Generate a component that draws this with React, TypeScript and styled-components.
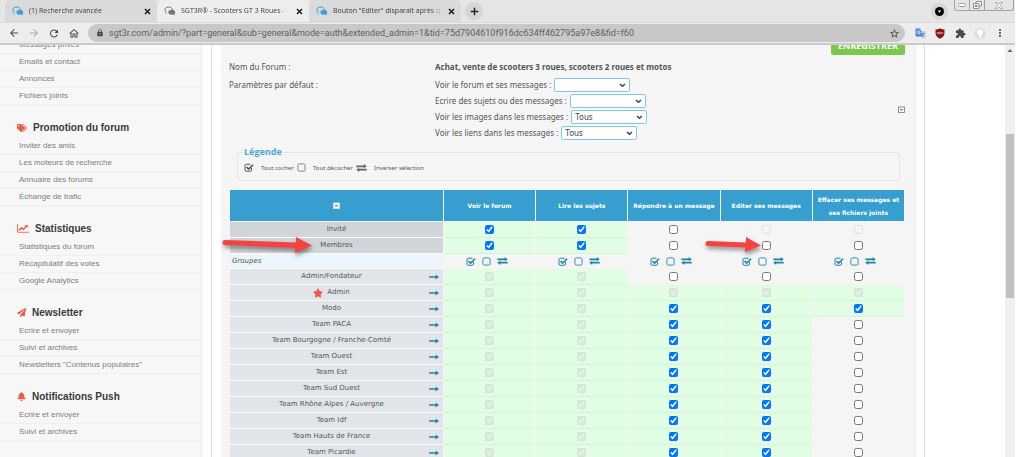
import React from 'react';
import styled, { createGlobalStyle, css } from 'styled-components';
import {
  MdArrowBack,
  MdArrowForward,
  MdRefresh,
  MdOutlineHome,
  MdLock,
  MdStarBorder,
  MdExtension,
  MdMoreVert,
} from 'react-icons/md';
import { FaTags, FaPaperPlane, FaBell, FaStar } from 'react-icons/fa';

const GlobalStyle = createGlobalStyle`
  *, *::before, *::after { box-sizing: border-box; }
  body {
    margin: 0;
    background: #fff;
    font-family: "DejaVu Sans", Verdana, sans-serif;
    font-size: 7px;
    color: #555;
  }
  button, select, input { font: inherit; margin: 0; }
  button { border: 0; padding: 0; background: none; color: inherit; }
  a { color: inherit; text-decoration: none; }
`;

const Window = styled.div`
  display: flex;
  flex-direction: column;
  height: 100vh;
  margin-right: 9px;
  overflow: hidden;
`;

/* ---------- browser frame ---------- */

const TabStrip = styled.div`
  display: flex;
  flex: none;
  height: 22px;
  padding-left: 5px;
  background: #e5e5e5;
`;

const Tab = styled.div<{ $active?: boolean }>`
  display: flex;
  align-items: center;
  gap: 5px;
  width: 152px;
  padding: 0 5px 0 7px;
  border-radius: 5px 5px 0 0;
  background: ${(p) => (p.$active ? '#ededed' : '#dadada')};
  color: #3c3c3c;
  font: 7px/10px "Open Sans", "Segoe UI", sans-serif;
`;

const TabTitle = styled.span`
  flex: 1;
  overflow: hidden;
  white-space: nowrap;
  mask-image: linear-gradient(to left, transparent, #000 12px);
`;

const IconButton = styled.button<{ $size?: number; $color?: string }>`
  display: flex;
  flex: none;
  align-items: center;
  justify-content: center;
  width: ${(p) => p.$size ?? 12}px;
  height: ${(p) => p.$size ?? 12}px;
  color: ${(p) => p.$color ?? '#4a4a4a'};
`;

const RoundButton = styled(IconButton)`
  align-self: center;
  border-radius: 50%;
  background: #d6d6d6;
`;

const NewTabButton = styled(RoundButton)`
  margin-left: 4px;
`;

const StripEnd = styled.div`
  display: flex;
  gap: 6px;
  margin-left: auto;
`;

const WindowControls = styled.div`
  display: flex;
  width: 60px;
  height: 11px;
  margin-right: 1px;
  border: 1px solid #a2a2a2;
  border-top: 0;
  border-radius: 0 0 3px 3px;
`;

const WindowControl = styled.button`
  display: flex;
  flex: 1;
  align-items: center;
  justify-content: center;
  & + & { border-left: 1px solid #a2a2a2; }
  &:last-child { flex: 2; }
`;

const Toolbar = styled.div`
  display: flex;
  flex: none;
  align-items: center;
  gap: 8px;
  height: 23px;
  padding: 0 9px 0 8px;
  border-top: 1px solid #dadada;
  border-bottom: 2px solid #cbcbcb;
  background: #ededed;
`;

const AddressBar = styled.div`
  display: flex;
  flex: 1;
  align-items: center;
  gap: 5px;
  height: 18px;
  margin-right: 1px;
  padding: 0 5px 0 8px;
  border-radius: 9px;
  background: #c8c8c9;
  color: #444;
`;

const AddressInput = styled.input`
  flex: 1;
  min-width: 0;
  padding: 0;
  border: 0;
  background: none;
  color: #606060;
  font: 9px/12px Roboto, "Segoe UI", sans-serif;
`;

/* ---------- page ---------- */

const Page = styled.div`
  display: flex;
  flex: 1;
  min-height: 0;
  overflow: hidden;
`;

const Sidebar = styled.nav`
  flex: none;
  width: 202px;
  border-right: 1px solid #ececec;
  background: #f7f7f7;
  font-family: "Liberation Sans", Arial, sans-serif;
  font-size: 8px;
  color: #7d7d7d;
`;

const MenuGroups = styled.div`
  margin-top: -8px;
`;

const MenuTitle = styled.h2`
  display: flex;
  align-items: center;
  gap: 6px;
  height: 17px;
  margin: 14px 0 2px;
  padding-left: 17px;
  color: #3a3a3a;
  font-size: 10px;
  font-weight: bold;
  svg { color: #f0594a; }
`;

const MenuList = styled.ul`
  margin: 0;
  padding: 0;
  list-style: none;
`;

const MenuItem = styled.li`
  height: 17px;
  padding-left: 19px;
  border-bottom: 1px solid #f0f0f0;
  line-height: 16px;
  white-space: nowrap;
`;

const Frame = styled.main`
  flex: 1;
  min-width: 0;
  margin: 0 80px 0 9px;
  padding: 0 8px 0 9px;
  border: 1px solid #e2e2e2;
  border-width: 0 1px;
`;

const Panel = styled.div`
  min-height: 100%;
  padding: 0 10px 0 8px;
  border: 1px solid #ebebeb;
  border-width: 0 1px 0 0;
  background: #f5f5f5;
`;

const SaveRow = styled.div`
  display: flex;
  justify-content: flex-end;
  margin-top: -8px;
`;

const SaveButton = styled.button`
  height: 18px;
  width: 74px;
  border-radius: 2px;
  background: #7cc84e;
  color: #fff;
  font: bold 9px/18px "Open Sans", sans-serif;
`;

const Field = styled.div`
  display: grid;
  grid-template-columns: 206px 1fr auto;
  min-height: 16px;
  font: 8px/16px "Noto Sans", Verdana, sans-serif;
`;

const ForumField = styled(Field)`
  margin: 4px 0 2px;
`;

const DefaultsLine = styled.div`
  display: flex;
  align-items: center;
  gap: 3px;
  height: 16px;
`;

const SelectWrap = styled.span`
  position: relative;
  display: flex;
  width: 76px;
  svg { position: absolute; right: 4px; top: 5px; pointer-events: none; }
`;

const Select = styled.select`
  appearance: none;
  width: 100%;
  height: 14px;
  padding: 0 3px;
  border: 1px solid #7ccbee;
  border-radius: 2px;
  background: #fff;
  color: #444;
  line-height: 12px;
`;

const CollapseButton = styled(IconButton)`
  align-self: center;
`;

const LegendBox = styled.fieldset`
  display: flex;
  align-items: center;
  min-width: 0;
  height: 34px;
  margin: 6px 5px 8px 8px;
  padding: 0 6px 2px;
  border: 1px solid #e6e6e6;
  border-radius: 3px;
  font: 6px/8px "Noto Sans", sans-serif;
`;

const LegendTitle = styled.legend`
  padding: 0 2px 0 0;
  color: #4aa8d6;
  font: bold 9px/10px "Open Sans", sans-serif;
`;

const LegendItems = styled.div`
  display: flex;
  align-items: center;
  gap: 3px;
`;

const LegendItem = styled.span`
  display: flex;
  align-items: center;
  gap: 7px;
`;

/* ---------- rights table ---------- */

const Table = styled.table`
  width: 100%;
  table-layout: fixed;
  border-collapse: separate;
  border-spacing: 1px;
`;

const HeadCell = styled.th<{ $first?: boolean }>`
  width: ${(p) => (p.$first ? '213px' : 'auto')};
  height: 31px;
  padding: 0 2px;
  background: #369fcf;
  color: #fff;
  font: bold 6px/13px "DejaVu Sans", Verdana, sans-serif;
  button { margin: 0 auto; }
`;

const tones = {
  base: '#d1d5d9',
  group: '#e1e5ea',
  section: '#ecf6fa',
};

const NameCell = styled.th<{ $tone: keyof typeof tones }>`
  position: relative;
  height: 15px;
  padding: 0;
  background: ${(p) => tones[p.$tone]};
  box-shadow: 0 1px 0 #fdfdfd;
  color: #555;
  font-weight: normal;
  line-height: 13px;
  ${(p) =>
    p.$tone === 'section' &&
    css`
      height: 14px;
      padding-left: 2px;
      font-style: italic;
      text-align: left;
    `}
`;

const NameLine = styled.div`
  display: flex;
  align-items: center;
  padding: 0 4px;
`;

const Name = styled.span`
  display: flex;
  flex: 1;
  align-items: center;
  justify-content: center;
  gap: 4px;
  svg { color: #f0594a; }
`;

const RightCell = styled.td<{ $granted?: boolean }>`
  position: relative;
  padding: 0;
  background: ${(p) => (p.$granted ? '#e1fee4' : '#f5f5f5')};
  box-shadow: ${(p) => (p.$granted ? '0 1px 0 #d3f7d5' : 'none')};
  text-align: center;
`;

const Checkbox = styled.input`
  display: block;
  width: 9px;
  height: 9px;
  margin: 0 auto;
  &:disabled { opacity: 0.5; }
`;

const Tools = styled.div`
  display: flex;
  align-items: center;
  justify-content: center;
  gap: 6px;
  padding-right: 6px;
`;

const Pointer = styled.svg<{ $long?: boolean }>`
  position: absolute;
  z-index: 1;
  top: -2px;
  ${(p) => (p.$long ? 'left: -8px;' : 'right: calc(50% + 5px);')}
  overflow: visible;
  filter: drop-shadow(1px 3px 2px rgba(0, 0, 0, 0.4));
  pointer-events: none;
`;

const Scrollbar = styled.div`
  display: flex;
  flex: none;
  flex-direction: column;
  align-items: center;
  width: 10px;
  padding-top: 3px;
  background: #f0f0f0;
`;

const ScrollThumb = styled.div`
  width: 8px;
  height: 40%;
  margin-top: 81px;
  background: #c1c1c1;
`;

/* ---------- drawings ---------- */

const Favicon = ({ grey }: { grey?: boolean }) => {
  const c = grey ? '#777' : '#3ba0da';
  return (
    <svg width="12" height="10" viewBox="0 0 24 20">
      <path d="M3 15c1.200-.7 1.700-1.700 1.700-2.900C2.800 10.900 1.800 9.400 1.800 7.700 1.800 4.500 5 2 9.300 2s7.200 2.200 7.500 4.800" fill="none" stroke={c} strokeWidth="2" strokeLinecap="round" />
      <path d="M15.500 7.500c-3.900 0-7 2.200-7 5s3.100 5 7 5c.8 0 1.600-.1 2.300-.3 1 .7 2.400 1.300 4.200 1.300-.8-.8-1.200-1.700-1.200-2.700 1.100-.9 1.700-2.100 1.700-3.300 0-2.800-3.100-5-7-5z" fill={c} />
    </svg>
  );
};

const Cross = () => (
  <svg width="7" height="7" viewBox="0 0 14 14" stroke="currentColor" strokeWidth="3.200">
    <path d="M2 2l10 10M12 2L2 12" />
  </svg>
);

const Plus = () => (
  <svg width="9" height="9" viewBox="0 0 18 18" stroke="currentColor" strokeWidth="3">
    <path d="M9 1.500v15M1.500 9h15" />
  </svg>
);

const CheckSquare = ({ color = '#1f87a6' }: { color?: string }) => (
  <svg width="10" height="9" viewBox="0 0 20 18" fill="none" stroke={color}>
    <path d="M15 10v4a2.500 2.500 0 0 1-2.500 2.500H4.500A2.500 2.500 0 0 1 2 14V5a2.500 2.500 0 0 1 2.500-2.500H13" strokeWidth="2" />
    <path d="M5 8l4.300 4.300L18.300 3.500" strokeWidth="3.400" />
  </svg>
);

const EmptySquare = ({ color = '#1f87a6' }: { color?: string }) => (
  <svg width="9" height="9" viewBox="0 0 18 18" fill="none" stroke={color}>
    <rect x="1.800" y="1.800" width="14.400" height="14.400" rx="3" strokeWidth="1.800" />
  </svg>
);

const Exchange = ({ color = '#1f87a6' }: { color?: string }) => (
  <svg width="11" height="8" viewBox="0 0 22 16" fill={color}>
    <path d="M.5 3h15V.2l6 4.500-6 4V6.400H.5zM21.500 9.700H6.500V7.400L.5 11.500l6 4.300V13.100h15z" />
  </svg>
);

const ArrowRight = () => (
  <svg width="10" height="6" viewBox="0 0 20 12" fill="#1f87a6">
    <path d="M0 4.300h13V1l7 5-7 5V7.700H0z" />
  </svg>
);

const ChartLine = () => (
  <svg width="12" height="9" viewBox="0 0 24 18" fill="none" stroke="currentColor">
    <path d="M1.200 0v16.500H24" strokeWidth="1.800" />
    <path d="M4 12.500l5-5 3.500 3.500 6.500-6.500" strokeWidth="3" />
    <path d="M15.500 2h6v6z" fill="currentColor" stroke="none" />
  </svg>
);

const Chevron = () => (
  <svg width="7" height="5" viewBox="0 0 14 10" fill="none" stroke="#444" strokeWidth="3.200">
    <path d="M2 2l5 4.500L12 2" />
  </svg>
);

const Minus = ({ light }: { light?: boolean }) => (
  <svg width="7" height="7" viewBox="0 0 14 14">
    <rect x="1" y="2" width="12" height="11" fill="#f7f7f7" stroke={light ? '#d8e6ee' : '#777'} strokeWidth="1.600" />
    <path d="M4 7.500h6" stroke="#555" strokeWidth="1.800" />
  </svg>
);

const Translate = () => (
  <svg width="11" height="11" viewBox="0 0 22 22">
    <path d="M9 6h10a2 2 0 0 1 2 2v11a2 2 0 0 1-2 2h-6z" fill="#c9ccd1" />
    <path d="M14 11h6M17 10c0 4-2 6-3 7M15 13c1 2 3 4 4 4" stroke="#5f7fae" strokeWidth="1.300" fill="none" />
    <path d="M2.500 1h8l5 16H2.500A1.500 1.500 0 0 1 1 15.500v-13A1.500 1.500 0 0 1 2.500 1z" fill="#4a86ee" />
    <path d="M10 7.300A3 3 0 1 0 10.300 9H7.700" stroke="#fff" strokeWidth="1.500" fill="none" />
  </svg>
);

const Shield = () => (
  <svg width="10" height="11" viewBox="0 0 20 22">
    <path d="M10 .5c3 2 6 2.600 9 2.700v7c0 5.500-4 9-9 11.500C5 19.200 1 15.700 1 10.200v-7C4 3.100 7 2.500 10 .5z" fill="#8c0f14" />
    <path d="M4.500 8v3.500h2.700V8M9.300 7v4.500h2V9.300h-2M14.500 8.600a1.400 1.400 0 1 0 .1 0" stroke="#f2dcdc" strokeWidth="1.200" fill="none" />
  </svg>
);

const Avatar = () => (
  <svg width="13" height="13" viewBox="0 0 26 26">
    <circle cx="13" cy="13" r="12.500" fill="#dedede" />
    <path d="M13 4c4 0 6 2.500 6 6s-2 5-3 7v5h-5v-5c-3-1-4-4-4-7s2-6 6-6z" fill="#fff" />
  </svg>
);

const RedArrow = ({ long }: { long?: boolean }) =>
  long ? (
    <Pointer $long width="90" height="18" viewBox="0 0 90 18" aria-hidden="true">
      <path d="M3 4L74 6.500V1L90 9.500 73 17v-5L3 9A2.500 2.500 0 0 1 3 4z" fill="#f74242" />
    </Pointer>
  ) : (
    <Pointer width="56" height="18" viewBox="0 0 56 18" aria-hidden="true">
      <path d="M3 5L41 6.500V1L56 9.500 40 16v-4.500L3 10A2.500 2.500 0 0 1 3 5z" fill="#f74242" />
    </Pointer>
  );

/* ---------- data ---------- */

const menu = [
  {
    title: '',
    icon: null,
    items: ['Messages privés', 'Emails et contact', 'Annonces', 'Fichiers joints'],
  },
  {
    title: 'Promotion du forum',
    icon: <FaTags size={10} />,
    items: ['Inviter des amis', 'Les moteurs de recherche', 'Annuaire des forums', 'Échange de trafic'],
  },
  {
    title: 'Statistiques',
    icon: <ChartLine />,
    items: ['Statistiques du forum', 'Récapitulatif des votes', 'Google Analytics'],
  },
  {
    title: 'Newsletter',
    icon: <FaPaperPlane size={9} />,
    items: ['Ecrire et envoyer', 'Suivi et archives', 'Newsletters "Contenus populaires"'],
  },
  {
    title: 'Notifications Push',
    icon: <FaBell size={9} />,
    items: ['Ecrire et envoyer', 'Suivi et archives'],
  },
];

const defaults = [
  { id: 'view', label: 'Voir le forum et ses messages :', value: '' },
  { id: 'write', label: 'Ecrire des sujets ou des messages :', value: '' },
  { id: 'images', label: 'Voir les images dans les messages :', value: 'Tous' },
  { id: 'links', label: 'Voir les liens dans les messages :', value: 'Tous' },
];

const columns = [
  'Voir le forum',
  'Lire les sujets',
  'Répondre à un message',
  'Editer ses messages',
  'Effacer ses messages et ses fichiers joints',
];

/* x: checked, o: unchecked, X: checked and locked, O: unchecked and locked */
const baseRows = [
  { name: 'Invité', rights: 'xxoOO' },
  { name: 'Membres', rights: 'xxooo' },
];

const groupRows = [
  { name: 'Admin/Fondateur', rights: 'XXooo' },
  { name: 'Admin', rights: 'XXXXX' },
  { name: 'Modo', rights: 'XXxxx' },
  ...[
    'Team PACA',
    'Team Bourgogne / Franche-Comté',
    'Team Ouest',
    'Team Est',
    'Team Sud Ouest',
    'Team Rhône Alpes / Auvergne',
    'Team Idf',
    'Team Hauts de France',
    'Team Picardie',
  ].map((name) => ({ name, rights: 'XXxxo' })),
];

const Rights = ({ name, rights }: { name: string; rights: string }) => (
  <>
    {rights.split('').map((r, i) => {
      const on = r.toLowerCase() === 'x';
      return (
        <RightCell key={columns[i]} $granted={on}>
          <Checkbox
            type="checkbox"
            aria-label={`${name} : ${columns[i]}`}
            defaultChecked={on}
            disabled={r === 'X' || r === 'O'}
          />
          {name === 'Membres' && i === 3 && <RedArrow />}
        </RightCell>
      );
    })}
  </>
);

export default function App() {
  return (
    <Window>
      <GlobalStyle />
      <TabStrip>
        {['(1) Recherche avancée', 'SGT3R® - Scooters GT 3 Roues -', 'Bouton "Editer" disparaît après q'].map((title, i) => (
          <Tab key={title} $active={i === 1}>
            <Favicon grey={i === 1} />
            <TabTitle>{title}</TabTitle>
            <IconButton $size={9} $color="#222" aria-label="Fermer l'onglet">
              <Cross />
            </IconButton>
          </Tab>
        ))}
        <NewTabButton $size={18} $color="#222" aria-label="Nouvel onglet">
          <Plus />
        </NewTabButton>
        <StripEnd>
          <RoundButton $size={17} aria-label="Rechercher des onglets">
            <svg width="9" height="9" viewBox="0 0 18 18">
              <circle cx="9" cy="9" r="9" fill="#000" />
              <path d="M5.500 7h7L9 11.500z" fill="#fff" />
            </svg>
          </RoundButton>
          <WindowControls>
            <WindowControl aria-label="Réduire">
              <svg width="8" height="4" viewBox="0 0 16 8">
                <rect x="1" y="1" width="14" height="6" rx="2" fill="#fff" stroke="#888" strokeWidth="1.500" />
              </svg>
            </WindowControl>
            <WindowControl aria-label="Restaurer">
              <svg width="9" height="8" viewBox="0 0 18 16" fill="#f4f4f4" stroke="#777" strokeWidth="1.600">
                <rect x="6" y="1" width="11" height="9" rx="1" />
                <rect x="1" y="5" width="11" height="10" rx="1" />
                <rect x="5" y="9" width="3" height="2" />
              </svg>
            </WindowControl>
            <WindowControl aria-label="Fermer">
              <svg width="8" height="7" viewBox="0 0 16 14">
                <path d="M1 1h4l3 3 3-3h4l-5 6 5 6h-4l-3-3-3 3H1l5-6z" fill="#fff" stroke="#888" strokeWidth="1.300" />
              </svg>
            </WindowControl>
          </WindowControls>
        </StripEnd>
      </TabStrip>
      <Toolbar>
        <IconButton aria-label="Page précédente"><MdArrowBack size={12} /></IconButton>
        <IconButton aria-label="Page suivante" $color="#a9a9a9"><MdArrowForward size={12} /></IconButton>
        <IconButton aria-label="Actualiser"><MdRefresh size={13} /></IconButton>
        <IconButton aria-label="Accueil"><MdOutlineHome size={13} /></IconButton>
        <AddressBar>
          <MdLock size={8} />
          <AddressInput
            aria-label="Adresse"
            defaultValue="sgt3r.com/admin/?part=general&sub=general&mode=auth&extended_admin=1&tid=75d7904610f916dc634ff462795a97e8&fid=f60"
          />
          <IconButton aria-label="Ajouter aux favoris"><MdStarBorder size={11} /></IconButton>
        </AddressBar>
        <IconButton aria-label="Traduire"><Translate /></IconButton>
        <IconButton aria-label="Bloqueur"><Shield /></IconButton>
        <IconButton aria-label="Extensions"><MdExtension size={11} /></IconButton>
        <IconButton aria-label="Profil"><Avatar /></IconButton>
        <IconButton aria-label="Menu"><MdMoreVert size={12} /></IconButton>
      </Toolbar>
      <Page>
        <Sidebar>
          <MenuGroups>
            {menu.map((group) => (
              <section key={group.title}>
                {group.title && (
                  <MenuTitle>
                    {group.icon}
                    {group.title}
                  </MenuTitle>
                )}
                <MenuList>
                  {group.items.map((item) => (
                    <MenuItem key={item}>
                      <a href="#">{item}</a>
                    </MenuItem>
                  ))}
                </MenuList>
              </section>
            ))}
          </MenuGroups>
        </Sidebar>
        <Frame>
          <Panel>
            <SaveRow>
              <SaveButton>ENREGISTRER</SaveButton>
            </SaveRow>
            <ForumField>
              <span>Nom du Forum :</span>
              <strong>Achat, vente de scooters 3 roues, scooters 2 roues et motos</strong>
            </ForumField>
            <Field>
              <span>Paramètres par défaut :</span>
              <div>
                {defaults.map((d) => (
                  <DefaultsLine key={d.id}>
                    <label htmlFor={d.id}>{d.label}</label>
                    <SelectWrap>
                      <Select id={d.id} defaultValue={d.value}>
                        <option value=""></option>
                        <option>Tous</option>
                      </Select>
                      <Chevron />
                    </SelectWrap>
                  </DefaultsLine>
                ))}
              </div>
              <CollapseButton $size={7} aria-label="Replier"><Minus /></CollapseButton>
            </Field>
            <LegendBox>
              <LegendTitle>Légende</LegendTitle>
              <LegendItems>
                <LegendItem><CheckSquare color="#555" />Tout cocher</LegendItem>
                <LegendItem><EmptySquare color="#777" />Tout décocher</LegendItem>
                <LegendItem><Exchange color="#666" />Inverser sélection</LegendItem>
              </LegendItems>
            </LegendBox>
            <Table>
              <thead>
                <tr>
                  <HeadCell $first scope="col">
                    <IconButton $size={9} aria-label="Replier le tableau"><Minus light /></IconButton>
                  </HeadCell>
                  {columns.map((c) => (
                    <HeadCell key={c} scope="col">{c}</HeadCell>
                  ))}
                </tr>
              </thead>
              <tbody>
                {baseRows.map((row) => (
                  <tr key={row.name}>
                    <NameCell $tone="base" scope="row">
                      {row.name}
                      {row.name === 'Membres' && <RedArrow long />}
                    </NameCell>
                    <Rights {...row} />
                  </tr>
                ))}
                <tr>
                  <NameCell $tone="section" scope="row">Groupes</NameCell>
                  {columns.map((c) => (
                    <RightCell key={c}>
                      <Tools>
                        <IconButton $size={10} aria-label="Tout cocher"><CheckSquare /></IconButton>
                        <IconButton $size={9} aria-label="Tout décocher"><EmptySquare /></IconButton>
                        <IconButton $size={11} aria-label="Inverser sélection"><Exchange /></IconButton>
                      </Tools>
                    </RightCell>
                  ))}
                </tr>
                {groupRows.map((row) => (
                  <tr key={row.name}>
                    <NameCell $tone="group" scope="row">
                      <NameLine>
                        <Name>
                          {row.name === 'Admin' && <FaStar size={10} />}
                          {row.name}
                        </Name>
                        <ArrowRight />
                      </NameLine>
                    </NameCell>
                    <Rights {...row} />
                  </tr>
                ))}
              </tbody>
            </Table>
          </Panel>
        </Frame>
        <Scrollbar>
          <svg width="6" height="5" viewBox="0 0 12 10"><path d="M1 8l5-6 5 6z" fill="#666" /></svg>
          <ScrollThumb />
        </Scrollbar>
      </Page>
    </Window>
  );
}
